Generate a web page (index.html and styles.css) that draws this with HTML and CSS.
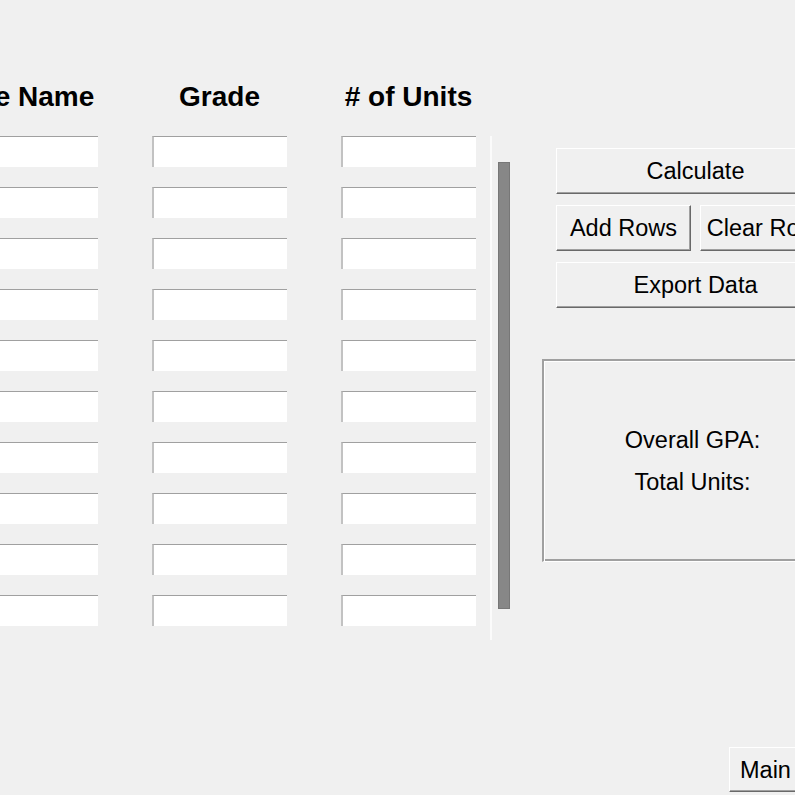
FILE: index.html
```html
<!DOCTYPE html>
<html lang="en">
<head>
<meta charset="utf-8">
<title>GPA Calculator</title>
<link rel="stylesheet" href="styles.css">
</head>
<body>
<div class="app">
  <div class="main">
    <div class="table">
      <div class="head">Course Name</div>
      <div class="head">Grade</div>
      <div class="head"># of Units</div>
      <div class="entry"></div><div class="entry"></div><div class="entry"></div>
      <div class="entry"></div><div class="entry"></div><div class="entry"></div>
      <div class="entry"></div><div class="entry"></div><div class="entry"></div>
      <div class="entry"></div><div class="entry"></div><div class="entry"></div>
      <div class="entry"></div><div class="entry"></div><div class="entry"></div>
      <div class="entry"></div><div class="entry"></div><div class="entry"></div>
      <div class="entry"></div><div class="entry"></div><div class="entry"></div>
      <div class="entry"></div><div class="entry"></div><div class="entry"></div>
      <div class="entry"></div><div class="entry"></div><div class="entry"></div>
      <div class="entry"></div><div class="entry"></div><div class="entry"></div>
    </div>
    <div class="scroll">
      <div class="sep"></div>
      <div class="track"><div class="thumb"></div></div>
    </div>
    <div class="side">
      <div class="btn btn-wide">Calculate</div>
      <div class="btn-row">
        <div class="btn btn-half">Add Rows</div>
        <div class="btn btn-half">Clear Rows</div>
      </div>
      <div class="btn btn-wide">Export Data</div>
      <div class="result">
        <div class="result-line">Overall GPA:</div>
        <div class="result-line">Total Units:</div>
      </div>
    </div>
  </div>
  <div class="footer">
    <div class="btn btn-main">Main Menu</div>
  </div>
</div>
</body>
</html>
```

FILE: styles.css
```css
html, body {
  margin: 0;
  padding: 0;
  background: #f0f0f0;
  overflow: hidden;
  width: 795px;
  height: 795px;
}

body {
  font-family: "Liberation Sans", Arial, sans-serif;
  color: #000;
}

.app {
  margin-left: -90px;
  padding-top: 81px;
  width: 1100px;
}

.main {
  display: flex;
  align-items: flex-start;
}

.table {
  display: grid;
  grid-template-columns: 188px 135px 135px;
  column-gap: 54px;
  row-gap: 20px;
}

.head {
  font-weight: bold;
  font-size: 28px;
  line-height: 32px;
  padding-bottom: 3px;
  text-align: center;
  white-space: nowrap;
}

.entry {
  box-sizing: border-box;
  height: 31px;
  background: #fff;
  border-top: 1px solid #a0a0a0;
  border-left: 2px solid #c2c2c2;
}

.scroll {
  display: flex;
  margin-left: 14px;
  margin-top: 55px;
  height: 504px;
}

.sep {
  width: 2px;
  background: #fbfbfb;
}

.track {
  box-sizing: border-box;
  margin-left: 6px;
  width: 12px;
  padding: 26px 0 31px;
}

.thumb {
  height: 100%;
  background: #878787;
  box-shadow: inset 0 0 0 1px #777;
}

.side {
  display: flex;
  flex-direction: column;
  margin-left: 32px;
  margin-top: 67px;
}

.btn {
  box-sizing: border-box;
  display: flex;
  align-items: center;
  justify-content: center;
  height: 46px;
  background: #f0f0f0;
  border: 1px solid;
  border-color: #fff #696969 #696969 #fff;
  box-shadow: inset -1px -1px 0 #a0a0a0;
  font-size: 23.5px;
  line-height: 28px;
  white-space: nowrap;
}

.btn-wide {
  margin-left: 14px;
  width: 279px;
}

.btn-row {
  display: flex;
  gap: 9px;
  margin: 11px 0 11px 14px;
}

.btn-half {
  width: 135px;
}

.result {
  box-sizing: border-box;
  display: flex;
  flex-direction: column;
  justify-content: center;
  align-items: center;
  margin-top: 51px;
  width: 300px;
  height: 203px;
  border-style: solid;
  border-width: 2px 1px 1px 2px;
  border-color: #a0a0a0 #fff #fff #a0a0a0;
  box-shadow: inset 1px 1px 0 #fff, inset -2px -2px 0 #a0a0a0;
  font-size: 23.5px;
}

.result-line {
  line-height: 42px;
}

.footer {
  display: flex;
  margin-top: 107px;
  padding-left: 819px;
}

.btn-main {
  height: 45px;
  padding: 0 10px;
  justify-content: flex-start;
}
```
